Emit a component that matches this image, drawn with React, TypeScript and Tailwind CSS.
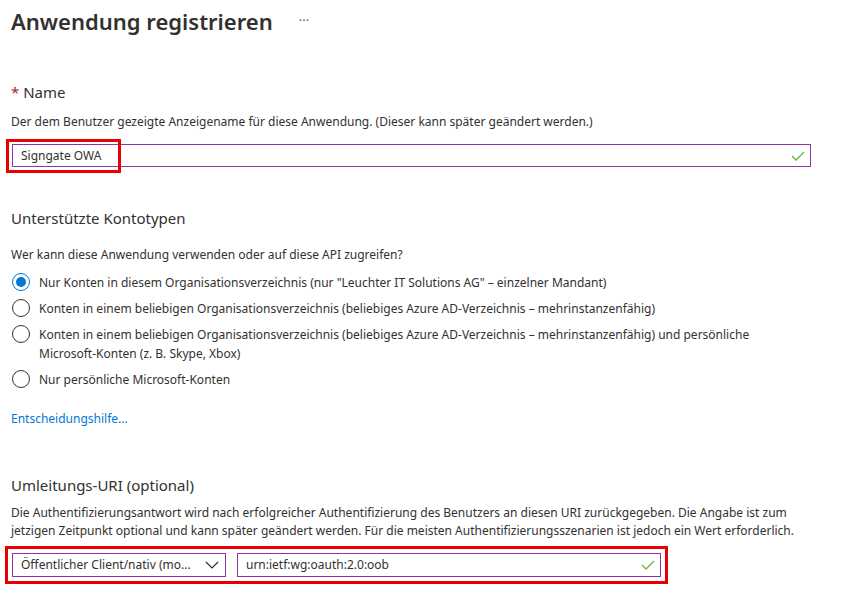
import React from 'react'

const radios = [
  { label: 'Nur Konten in diesem Organisationsverzeichnis (nur "Leuchter IT Solutions AG" – einzelner Mandant)', checked: true },
  { label: 'Konten in einem beliebigen Organisationsverzeichnis (beliebiges Azure AD-Verzeichnis – mehrinstanzenfähig)', checked: false },
  { label: 'Konten in einem beliebigen Organisationsverzeichnis (beliebiges Azure AD-Verzeichnis – mehrinstanzenfähig) und persönliche Microsoft-Konten (z. B. Skype, Xbox)', checked: false },
  { label: 'Nur persönliche Microsoft-Konten', checked: false },
]

function Check() {
  return (
    <svg width="14" height="10" viewBox="0 0 14 10" className="shrink-0">
      <path d="M1 5 L5 9 L13 1" fill="none" stroke="#6bb33d" strokeWidth="1.3" />
    </svg>
  )
}

function Radio({ checked }: { checked: boolean }) {
  return (
    <span
      className={
        checked
          ? 'w-[18px] h-[18px] rounded-full border border-[#0078d4] flex items-center justify-center shrink-0'
          : 'w-[18px] h-[18px] rounded-full border border-[#323130] shrink-0'
      }
    >
      {checked && <span className="w-[10px] h-[10px] rounded-full bg-[#0078d4]" />}
    </span>
  )
}

export default function App() {
  return (
    <div className="w-[841px] h-[600px] bg-white text-[#323130] px-[11px] overflow-hidden" style={{ fontFamily: '"Noto Sans", "Open Sans", sans-serif' }}>
      <div className="flex items-center pt-[4px] h-[38px]">
        <h1 className="text-[22px] font-semibold leading-[32px]">Anwendung registrieren</h1>
        <span className="ml-[26px] text-[13px] text-[#605e5c]">···</span>
      </div>

      <div className="mt-[44px] text-[15px] leading-[20px]">
        <span className="text-[#a4262c]">*</span> Name
      </div>
      <p className="mt-[11px] text-[12px] leading-[18px]">
        Der dem Benutzer gezeigte Anzeigename für diese Anwendung. (Dieser kann später geändert werden.)
      </p>
      <div className="relative mt-[13px] ml-[1px] w-[799px]">
        <div className="h-[23px] border border-[#8e34a8] flex items-center justify-between pl-[8px] pr-[5px] text-[12px]">
          <span>Signgate OWA</span>
          <Check />
        </div>
        <div className="absolute left-[-6px] top-[-5px] w-[115px] h-[34px] border-[3px] border-[#e60000]" />
      </div>

      <div className="mt-[41px] text-[15px] leading-[20px]">Unterstützte Kontotypen</div>
      <p className="mt-[18px] text-[12px] leading-[18px]">Wer kann diese Anwendung verwenden oder auf diese API zugreifen?</p>
      <div className="mt-[9px] flex flex-col gap-[7px]">
        {radios.map((r, i) => (
          <div key={i} className="flex items-start gap-[9px] ml-[1px]">
            <Radio checked={r.checked} />
            <span className="text-[12px] leading-[19px] w-[760px]">{r.label}</span>
          </div>
        ))}
      </div>

      <div className="mt-[21px] text-[12px] leading-[18px] text-[#0078d4]">Entscheidungshilfe...</div>

      <div className="mt-[47px] text-[15px] leading-[20px]">Umleitungs-URI (optional)</div>
      <p className="mt-[9px] text-[12px] leading-[18px] w-[810px]">
        Die Authentifizierungsantwort wird nach erfolgreicher Authentifizierung des Benutzers an diesen URI zurückgegeben. Die Angabe ist zum jetzigen Zeitpunkt optional und kann später geändert werden. Für die meisten Authentifizierungsszenarien ist jedoch ein Wert erforderlich.
      </p>
      <div className="relative mt-[13px] ml-[1px] flex gap-[11px] w-[649px]">
        <div className="w-[214px] h-[24px] border border-[#8e34a8] flex items-center justify-between pl-[8px] pr-[6px] text-[12px]">
          <span>Öffentlicher Client/nativ (mo...</span>
          <svg width="14" height="8" viewBox="0 0 14 8">
            <path d="M1 1 L7 7 L13 1" fill="none" stroke="#323130" strokeWidth="1.2" />
          </svg>
        </div>
        <div className="flex-1 h-[24px] border border-[#8e34a8] flex items-center justify-between pl-[8px] pr-[5px] text-[12px]">
          <span>urn:ietf:wg:oauth:2.0:oob</span>
          <Check />
        </div>
        <div className="absolute left-[-7px] top-[-7px] w-[663px] h-[38px] border-[3px] border-[#e60000]" />
      </div>
    </div>
  )
}
